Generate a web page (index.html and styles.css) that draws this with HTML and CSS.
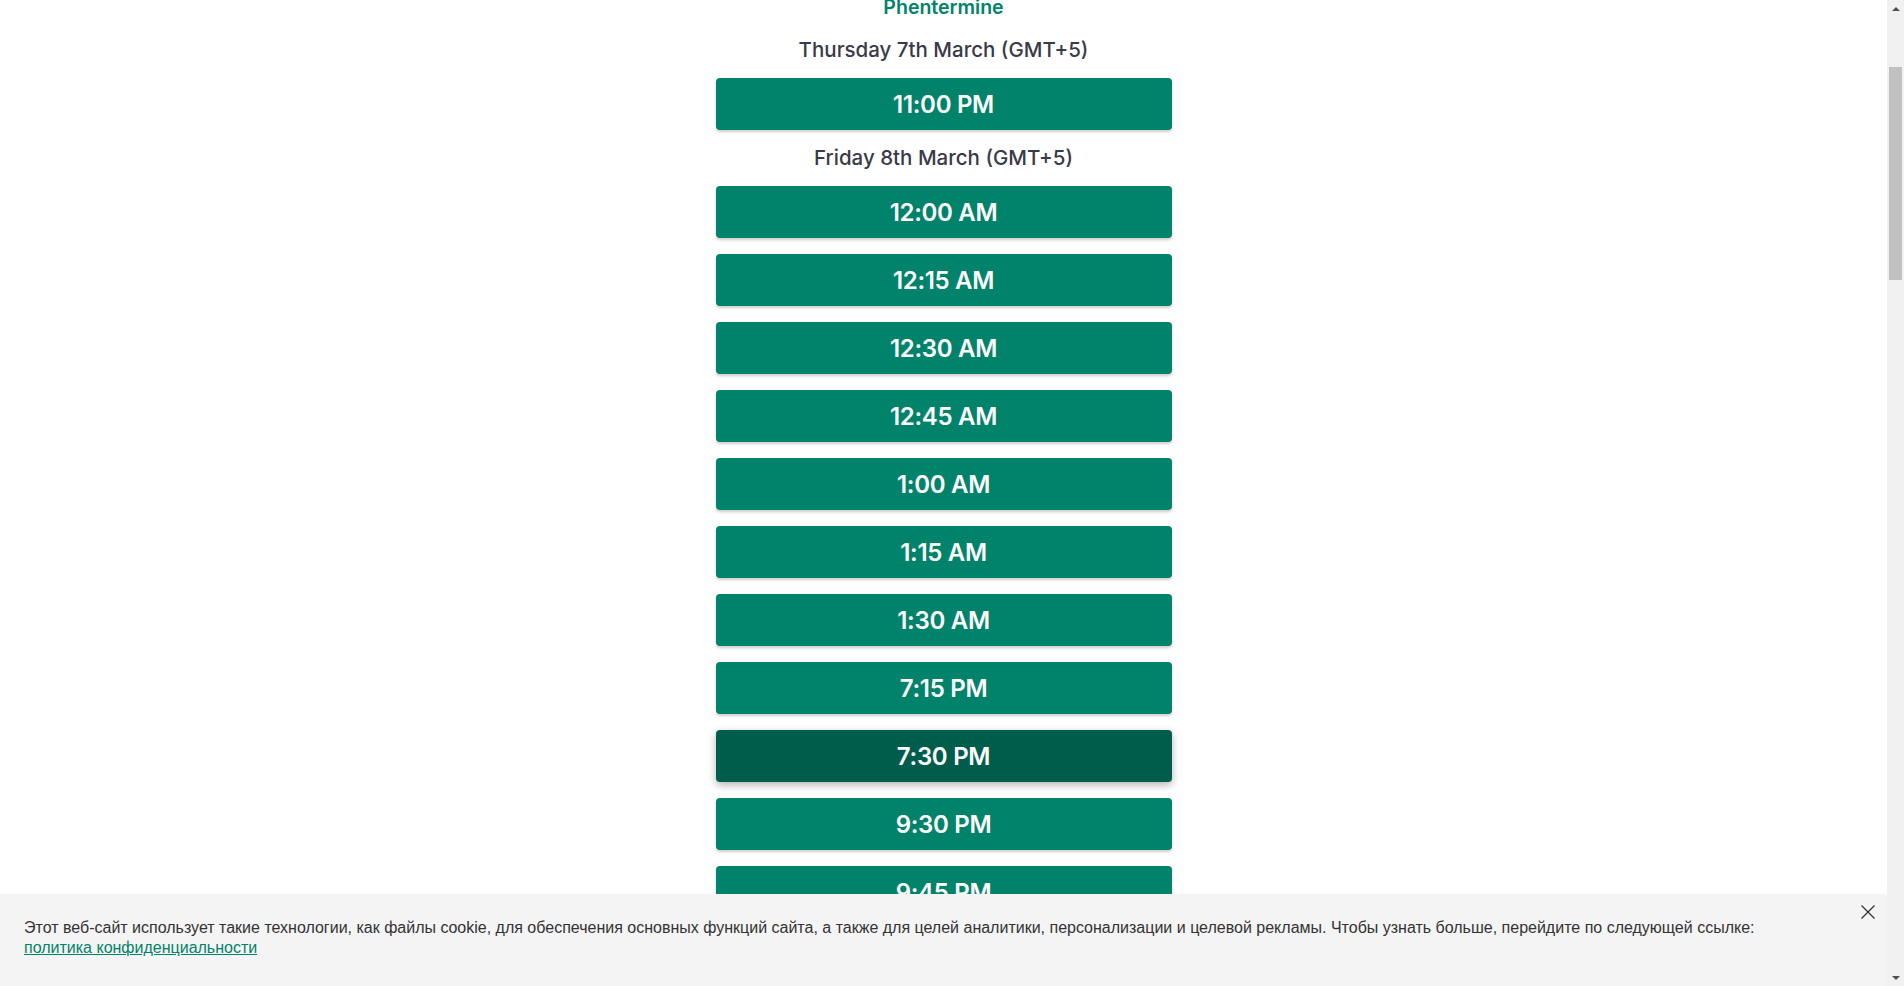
FILE: index.html
```html
<!DOCTYPE html>
<html lang="ru">
<head>
<meta charset="utf-8">
<title>Phentermine</title>
<link rel="stylesheet" href="styles.css">
</head>
<body>
<div class="viewport">
  <div class="page">
    <div class="schedule">
      <div class="service">Phentermine</div>
      <div class="day">Thursday 7th March (GMT+5)</div>
      <button class="slot">11:00 PM</button>
      <div class="day">Friday 8th March (GMT+5)</div>
      <button class="slot">12:00 AM</button>
      <button class="slot">12:15 AM</button>
      <button class="slot">12:30 AM</button>
      <button class="slot">12:45 AM</button>
      <button class="slot">1:00 AM</button>
      <button class="slot">1:15 AM</button>
      <button class="slot">1:30 AM</button>
      <button class="slot">7:15 PM</button>
      <button class="slot slot-hover">7:30 PM</button>
      <button class="slot">9:30 PM</button>
      <button class="slot">9:45 PM</button>
      <button class="slot">10:00 PM</button>
    </div>
    <div class="cookie">
      <p class="cookie-text">Этот веб-сайт использует такие технологии, как файлы cookie, для обеспечения основных функций сайта, а также для целей аналитики, персонализации и целевой рекламы. Чтобы узнать больше, перейдите по следующей ссылке: <br><a href="#" class="cookie-link">политика конфиденциальности</a></p>
      <button class="cookie-close" aria-label="Закрыть">
        <svg width="16" height="16" viewBox="0 0 16 16"><path d="M1.5 1.5 L14.5 14.5 M14.5 1.5 L1.5 14.5" stroke="#333" stroke-width="1.3" fill="none"/></svg>
      </button>
    </div>
  </div>
  <div class="scrollbar">
    <div class="sb-arrow sb-up"></div>
    <div class="sb-track"><div class="sb-thumb"></div></div>
    <div class="sb-arrow sb-down"></div>
  </div>
</div>
</body>
</html>
```
FILE: styles.css
```css
html, body {
  margin: 0;
  padding: 0;
  height: 100%;
  overflow: hidden;
  background: #fff;
}
.viewport {
  display: flex;
  height: 986px;
  width: 100%;
}
.page {
  flex: 1;
  position: relative;
  overflow: hidden;
  font-family: Inter, "Open Sans", sans-serif;
}
.schedule {
  width: 456px;
  margin: -7px auto 0;
  display: flex;
  flex-direction: column;
  align-items: stretch;
}
.service {
  text-align: center;
  color: #00836a;
  font-size: 19.5px;
  font-weight: 600;
  line-height: 28px;
  height: 29px;
}
.day {
  text-align: center;
  color: #3a3a48;
  font-size: 20.5px;
  font-weight: 500;
  line-height: 24px;
  padding: 16px 0;
}
.slot {
  height: 52px;
  border: 0;
  border-radius: 4px;
  background: #00836a;
  color: #fff;
  font-family: Inter, "Open Sans", sans-serif;
  font-size: 24px;
  font-weight: 600;
  letter-spacing: -0.3px;
  box-shadow: 0 2px 3px rgba(0, 0, 0, 0.2);
  cursor: pointer;
  padding: 0;
  margin: 0;
}
.slot + .slot {
  margin-top: 16px;
}
.slot-hover {
  background: #005d4b;
  box-shadow: 0 3px 8px rgba(0, 0, 0, 0.3);
}
.cookie {
  position: absolute;
  left: 0;
  right: 0;
  bottom: 0;
  height: 92px;
  background: #f4f4f4;
  display: flex;
  justify-content: space-between;
  align-items: flex-start;
  font-family: "Liberation Sans", Arial, sans-serif;
}
.cookie-text {
  margin: 0;
  padding: 24px 0 0 24px;
  font-size: 16px;
  line-height: 20px;
  color: #333;
}
.cookie-link {
  color: #00836a;
}
.cookie-close {
  background: none;
  border: 0;
  padding: 0;
  margin: 10px 11px 0 0;
  width: 16px;
  height: 16px;
  cursor: pointer;
}
.scrollbar {
  width: 17px;
  background: #f1f1f1;
  display: flex;
  flex-direction: column;
}
.sb-arrow {
  height: 17px;
  display: flex;
  align-items: center;
  justify-content: center;
}
.sb-up::before {
  content: "";
  border-left: 4px solid transparent;
  border-right: 4px solid transparent;
  border-bottom: 4px solid #505050;
}
.sb-down::before {
  content: "";
  border-left: 4px solid transparent;
  border-right: 4px solid transparent;
  border-top: 4px solid #505050;
}
.sb-track {
  flex: 1;
  padding-top: 50px;
}
.sb-thumb {
  margin: 0 2px;
  height: 213px;
  background: #c1c1c1;
}
```
